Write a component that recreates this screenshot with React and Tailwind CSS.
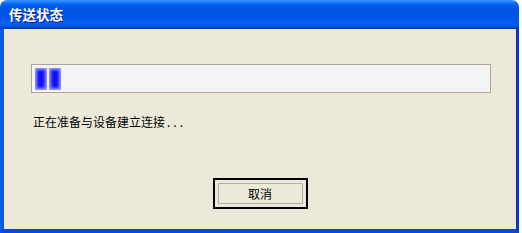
export default function App() {
  const cjk = { fontFamily: '"Noto Sans CJK SC", "Noto Sans", sans-serif' };
  return (
    <div className="w-[522px] h-[233px] bg-white overflow-hidden flex">
      <div className="w-[519px] h-[233px] flex flex-col">
        <div
          className="h-[29px] shrink-0 rounded-t-[7px] flex items-center pl-[9px] bg-[linear-gradient(to_bottom,#3a8cf8_0%,#2a86ff_6%,#0a6cf6_12%,#0260ee_18%,#0056e6_26%,#0054e3_50%,#0057ea_66%,#0260f2_78%,#025ced_86%,#0050d8_92%,#0040b8_96%,#0034a0_100%)]"
        >
          <span
            className="text-white font-bold text-[13.5px] leading-none [text-shadow:1px_1px_0_#0a1e6e]"
            style={cjk}
          >
            传送状态
          </span>
        </div>
        <div className="flex-1 flex flex-col bg-[#ece9d8] border-l-[4px] border-r-[3px] border-b-[4px] border-l-[#0c5ae9] border-r-[#0837c8] border-b-[#0a48da]">
          <div className="ml-[27px] mt-[35px] w-[460px] h-[29px] border border-[#aca899] bg-[#f4f4f4] flex items-center gap-[2px] pl-[3px]">
            <div className="w-[12px] h-[22px] bg-[#1010f8] shadow-[inset_0_0_3px_2px_#9a9aff]" />
            <div className="w-[12px] h-[22px] bg-[#1010f8] shadow-[inset_0_0_3px_2px_#9a9aff]" />
          </div>
          <div className="ml-[29px] mt-[21px] text-[12px] leading-[16px] text-black" style={cjk}>
            正在准备与设备建立连接<span className="tracking-[3px] ml-[2px]">...</span>
          </div>
          <div className="flex justify-center mt-[48px]">
            <div className="w-[95px] h-[31px] border-2 border-black p-[3px] bg-[#ece9d8]">
              <div className="w-full h-full border border-[#b4b0a0] flex items-center justify-center text-[12px] text-black" style={cjk}>
                取消
              </div>
            </div>
          </div>
        </div>
      </div>
    </div>
  );
}
